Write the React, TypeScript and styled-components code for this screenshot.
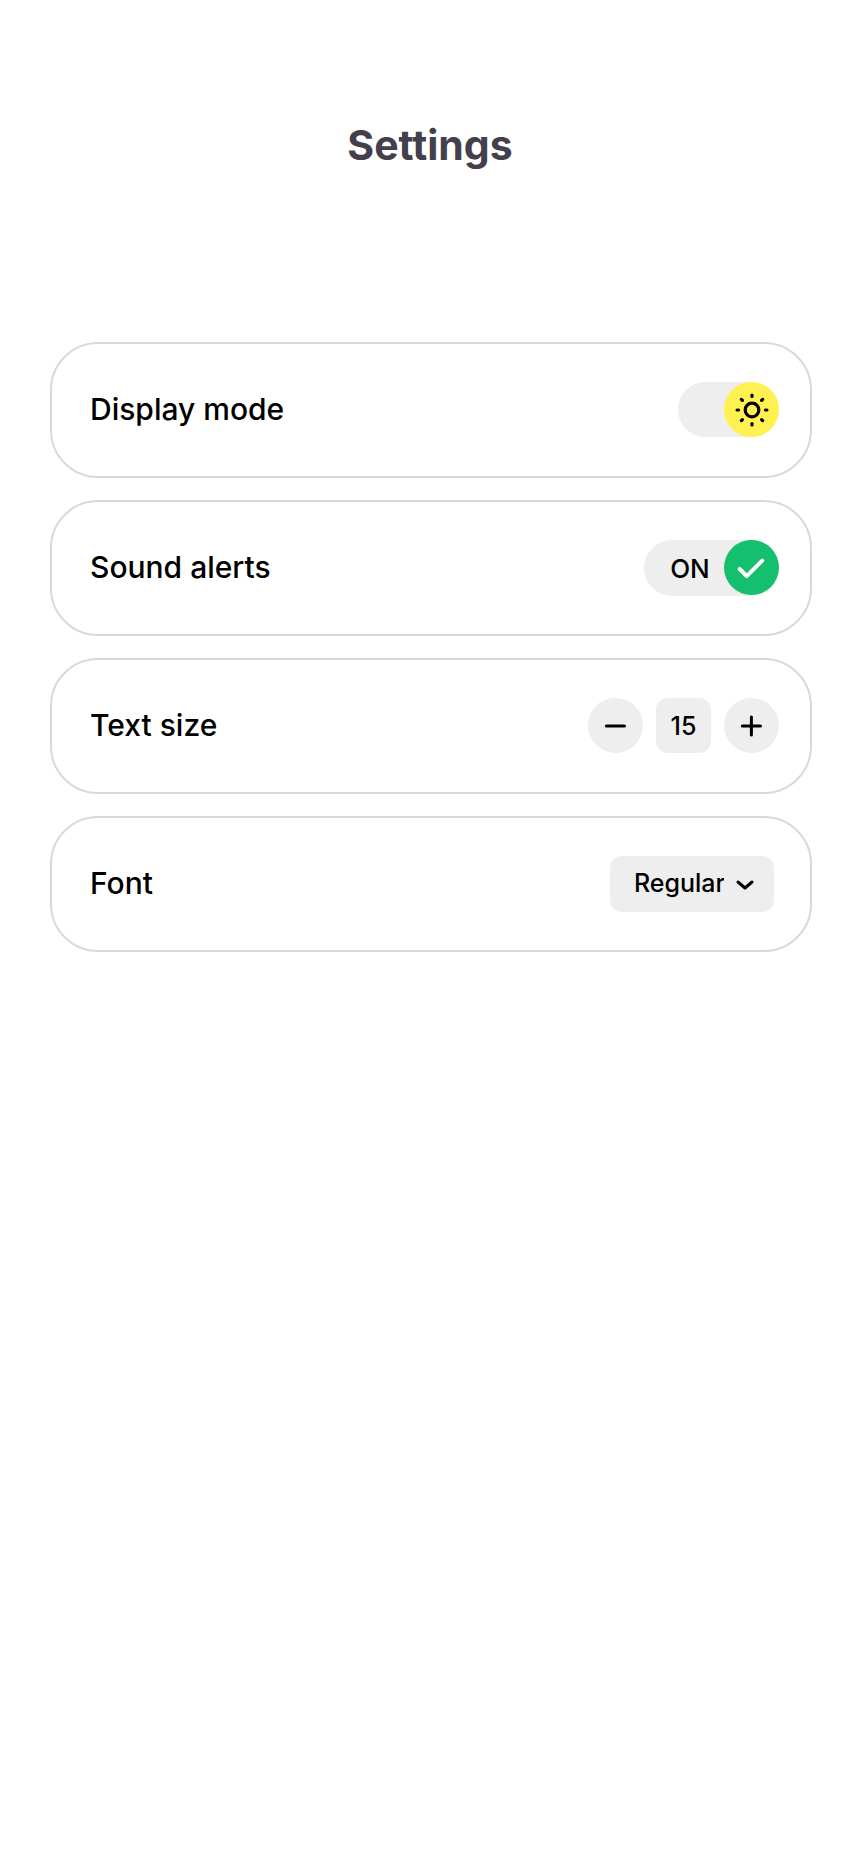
import React, { useState } from "react";
import styled, { createGlobalStyle } from "styled-components";

const GlobalStyle = createGlobalStyle`
  *, *::before, *::after { box-sizing: border-box; }
  body {
    margin: 0;
    background: #fff;
    color: #000;
    font-family: Inter, "Liberation Sans", sans-serif;
  }
  button, input, select { font: inherit; color: inherit; }
`;

const Page = styled.main`
  min-height: 100vh;
  padding: 121px 0 48px;
`;

const Title = styled.h1`
  margin: 0 0 173px;
  color: #433f4c;
  font-size: 41px;
  font-weight: 700;
  line-height: 48px;
  text-align: center;
`;

const SettingList = styled.div`
  display: flex;
  flex-direction: column;
  gap: 22px;
  margin: 0 48px 0 50px;
`;

const Card = styled.section`
  display: flex;
  justify-content: space-between;
  align-items: flex-start;
  padding: 38px 31px 38px 38px;
  min-height: 136px;
  border: 2px solid #d9d9d9;
  border-radius: 48px;
`;

const CardLabel = styled.label`
  font-size: 30px;
  font-weight: 500;
  line-height: 54px;
`;

const Track = styled.span<{ $on: boolean; $width: number; $height: number }>`
  position: relative;
  display: flex;
  flex-direction: ${(p) => (p.$on ? "row" : "row-reverse")};
  justify-content: flex-end;
  width: ${(p) => p.$width}px;
  height: ${(p) => p.$height}px;
  border-radius: 28px;
  background: #eee;
`;

const ToggleInput = styled.input`
  position: absolute;
  inset: 0;
  width: 100%;
  height: 100%;
  margin: 0;
  opacity: 0;
  cursor: pointer;
`;

const TrackText = styled.span`
  flex: 1;
  padding: 0 12px 0 24px;
  font-size: 26px;
  font-weight: 500;
  line-height: 58px;
  text-align: center;
`;

const Knob = styled.span<{ $color: string }>`
  display: flex;
  flex: none;
  align-items: center;
  justify-content: center;
  width: 55px;
  height: 55px;
  border-radius: 50%;
  background: ${(p) => p.$color};
`;

const Stepper = styled.div`
  display: flex;
  gap: 13px;
`;

const StepButton = styled.button`
  display: flex;
  align-items: center;
  justify-content: center;
  width: 55px;
  height: 55px;
  padding: 0;
  border: 0;
  border-radius: 50%;
  background: #eee;
  cursor: pointer;
`;

const StepValue = styled.output`
  width: 55px;
  height: 55px;
  border-radius: 12px;
  background: #eee;
  font-size: 25px;
  font-weight: 500;
  line-height: 57px;
  text-align: center;
`;

const SelectBox = styled.div`
  position: relative;
  margin-right: 5px;
`;

const Select = styled.select`
  appearance: none;
  width: 164px;
  height: 56px;
  padding: 0 50px 2px 24px;
  border: 0;
  border-radius: 12px;
  background: #eee;
  font-size: 25px;
  font-weight: 500;
  cursor: pointer;
`;

const SelectArrow = styled.svg`
  position: absolute;
  top: 23px;
  right: 19px;
  pointer-events: none;
`;

const SunIcon = () => (
  <svg width="37" height="37" viewBox="-0.5 -0.5 37 37" fill="none" stroke="#000" strokeWidth="3.2" strokeLinecap="round" aria-hidden="true">
    <circle cx="18.5" cy="18.5" r="6.8" />
    <path d="M18.5 3.6v1.4M18.5 32v1.4M3.6 18.5h1.4M32 18.5h1.4M7.9 7.9l1 1M28.1 28.1l1 1M7.9 29.1l1-1M28.1 8.9l1-1" />
  </svg>
);

const CheckIcon = () => (
  <svg width="30" height="24" viewBox="0 0 30 24" fill="none" stroke="#fff" strokeWidth="4" strokeLinecap="round" strokeLinejoin="round" aria-hidden="true">
    <path d="M2.7 13l7 7.1L25.2 4.6" />
  </svg>
);

const MinusIcon = () => (
  <svg width="23" height="23" viewBox="0 0 23 23" stroke="#000" strokeWidth="3" strokeLinecap="round" aria-hidden="true">
    <path d="M2.3 12h18.2" />
  </svg>
);

const PlusIcon = () => (
  <svg width="23" height="23" viewBox="0 0 23 23" stroke="#000" strokeWidth="3" strokeLinecap="round" aria-hidden="true">
    <path d="M2.3 12h18.2M11.4 2.9v18.2" />
  </svg>
);

export default function App() {
  const [light, setLight] = useState(true);
  const [sound, setSound] = useState(true);
  const [size, setSize] = useState(15);
  const [font, setFont] = useState("Regular");

  return (
    <>
      <GlobalStyle />
      <Page>
        <Title>Settings</Title>
        <SettingList>
          <Card>
            <CardLabel htmlFor="display-mode">Display mode</CardLabel>
            <Track $on={light} $width={101} $height={55}>
              <Knob $color="#fff250">
                <SunIcon />
              </Knob>
              <ToggleInput id="display-mode" type="checkbox" checked={light} onChange={(e) => setLight(e.target.checked)} />
            </Track>
          </Card>
          <Card>
            <CardLabel htmlFor="sound-alerts">Sound alerts</CardLabel>
            <Track $on={sound} $width={135} $height={56}>
              <TrackText>{sound ? "ON" : "OFF"}</TrackText>
              <Knob $color={sound ? "#14bf6d" : "#aaa"}>
                <CheckIcon />
              </Knob>
              <ToggleInput id="sound-alerts" type="checkbox" checked={sound} onChange={(e) => setSound(e.target.checked)} />
            </Track>
          </Card>
          <Card>
            <CardLabel htmlFor="text-size">Text size</CardLabel>
            <Stepper>
              <StepButton type="button" aria-label="Decrease text size" onClick={() => setSize(size - 1)}>
                <MinusIcon />
              </StepButton>
              <StepValue id="text-size">{size}</StepValue>
              <StepButton type="button" aria-label="Increase text size" onClick={() => setSize(size + 1)}>
                <PlusIcon />
              </StepButton>
            </Stepper>
          </Card>
          <Card>
            <CardLabel htmlFor="font">Font</CardLabel>
            <SelectBox>
              <Select id="font" value={font} onChange={(e) => setFont(e.target.value)}>
                <option>Regular</option>
                <option>Medium</option>
                <option>Bold</option>
              </Select>
              <SelectArrow width="20" height="12" viewBox="0 0 20 12" fill="none" stroke="#000" strokeWidth="3" strokeLinecap="round" strokeLinejoin="round" aria-hidden="true">
                <path d="M3 3l7 6 7-6" />
              </SelectArrow>
            </SelectBox>
          </Card>
        </SettingList>
      </Page>
    </>
  );
}
